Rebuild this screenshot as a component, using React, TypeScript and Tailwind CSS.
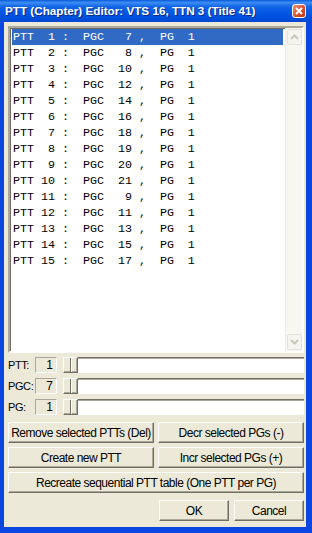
import React from 'react';

const rows: [number, number, number][] = [
  [1, 7, 1], [2, 8, 1], [3, 10, 1], [4, 12, 1], [5, 14, 1], [6, 16, 1], [7, 18, 1], [8, 19, 1],
  [9, 20, 1], [10, 21, 1], [11, 9, 1], [12, 11, 1], [13, 13, 1], [14, 15, 1], [15, 17, 1],
];

const pad = (n: number, w: number) => String(n).padStart(w, ' ');

const ui = { fontFamily: '"Liberation Sans", Arial, sans-serif' };
const mono = { fontFamily: '"Liberation Mono", "Courier New", monospace' };

const Btn: React.FC<{ children: React.ReactNode; className?: string }> = ({ children, className = '' }) => (
  <button
    className={`h-[21px] bg-[#ECE9D8] border border-t-white border-l-white border-r-[#716F64] border-b-[#716F64] shadow-[inset_-1px_-1px_0_#ACA899] text-[12px] tracking-[-0.5px] text-black leading-none ${className}`}
    style={ui}
  >
    {children}
  </button>
);

const Chevron: React.FC<{ up?: boolean }> = ({ up }) => (
  <svg width="9" height="6" viewBox="0 0 9 6">
    <path d={up ? 'M1 5 L4.5 1.5 L8 5' : 'M1 1 L4.5 4.5 L8 1'} fill="none" stroke="#C9C7BA" strokeWidth="2" />
  </svg>
);

const ArrowBtn: React.FC<{ up?: boolean }> = ({ up }) => (
  <div className="w-[15px] h-[16px] m-[1px] rounded-[2px] border border-[#E5E3D9] bg-[#F5F4EE] flex items-center justify-center">
    <Chevron up={up} />
  </div>
);

const SliderRow: React.FC<{ label: string; value: number }> = ({ label, value }) => (
  <div className="flex items-center h-[16px]">
    <span className="w-[27px] shrink-0 whitespace-nowrap text-[11px] tracking-[-0.4px] text-black" style={ui}>{label}</span>
    <div
      className="w-[22px] h-[16px] shrink-0 bg-[#ECE9D8] border border-[#ACA899] border-b-white border-r-white flex items-center justify-end pr-[3px] text-[12px] text-black"
      style={ui}
    >
      {value}
    </div>
    <div className="flex-1 ml-[6px] h-[16px] flex bg-white border-t border-t-[#716F64] shadow-[inset_0_1px_0_#ACA899]">
      <div className="w-[15px] h-[16px] -mt-[1px] bg-[#ECE9D8] border border-t-white border-l-white border-r-[#716F64] border-b-[#716F64] shadow-[inset_-1px_-1px_0_#ACA899] flex justify-center">
        <div className="w-[2px] h-full border-l border-l-[#716F64] border-r border-r-white" />
      </div>
    </div>
  </div>
);

export default function App() {
  return (
    <div className="w-[312px] h-[533px] flex flex-col bg-[#0A46DF] overflow-hidden select-none">
      {/* Title bar */}
      <div className="h-[22px] shrink-0 flex items-center pl-[5px] pr-[6px] bg-[linear-gradient(to_bottom,#0A5BD8_0%,#3C8DF5_12%,#1265E6_30%,#0054E3_65%,#0049D2_100%)]">
        <span className="flex-1 text-white font-bold text-[11.7px] [text-shadow:1px_1px_0_#0A2A8A] whitespace-nowrap" style={ui}>
          PTT (Chapter) Editor: VTS 16, TTN 3 (Title 41)
        </span>
        <div className="w-[14px] h-[14px] rounded-[3px] border border-white bg-[linear-gradient(135deg,#F09276,#D9512F_55%,#B83315)] flex items-center justify-center">
          <svg width="8" height="8" viewBox="0 0 8 8">
            <path d="M1 1 L7 7 M7 1 L1 7" stroke="white" strokeWidth="2" />
          </svg>
        </div>
      </div>

      {/* Client area */}
      <div className="flex-1 ml-[4px] mr-[6px] mb-[6px] bg-[#ECE9D8] pl-[4px] pr-[2px] pt-[4px] flex flex-col">
        {/* List */}
        <div className="h-[327px] shrink-0 flex border-2 border-t-[#ACA899] border-l-[#ACA899] border-r-white border-b-white shadow-[inset_1px_1px_0_#716F64] bg-white">
          <div className="flex-1 pt-[1px] px-[2px] overflow-hidden">
            {rows.map(([n, pgc, pg], i) => (
              <div
                key={n}
                className={`h-[16px] leading-[16px] pl-[1px] whitespace-pre text-[11.67px] ${i === 0 ? 'bg-[#316AC5] text-white' : 'text-black'}`}
                style={mono}
              >
                {`PTT ${pad(n, 2)} :  PGC ${pad(pgc, 3)} ,  PG ${pad(pg, 2)}`}
              </div>
            ))}
          </div>
          <div className="w-[17px] bg-[#F7F6F1] border-l border-l-[#EEEDE5] flex flex-col justify-between">
            <ArrowBtn up />
            <ArrowBtn />
          </div>
        </div>

        <div className="mt-[4px] flex flex-col gap-[5px]">
          <SliderRow label="PTT:" value={1} />
          <SliderRow label="PGC:" value={7} />
          <SliderRow label="PG:" value={1} />
        </div>

        <div className="mt-[7px] grid grid-cols-2 gap-x-[4px] gap-y-[4px]">
          <Btn>Remove selected PTTs (Del)</Btn>
          <Btn>Decr selected PGs (-)</Btn>
          <Btn>Create new PTT</Btn>
          <Btn>Incr selected PGs (+)</Btn>
          <Btn className="col-span-2">Recreate sequential PTT table (One PTT per PG)</Btn>
        </div>

        <div className="mt-[7px] flex justify-end gap-[5px]">
          <Btn className="w-[70px]">OK</Btn>
          <Btn className="w-[70px]">Cancel</Btn>
        </div>
      </div>
    </div>
  );
}
